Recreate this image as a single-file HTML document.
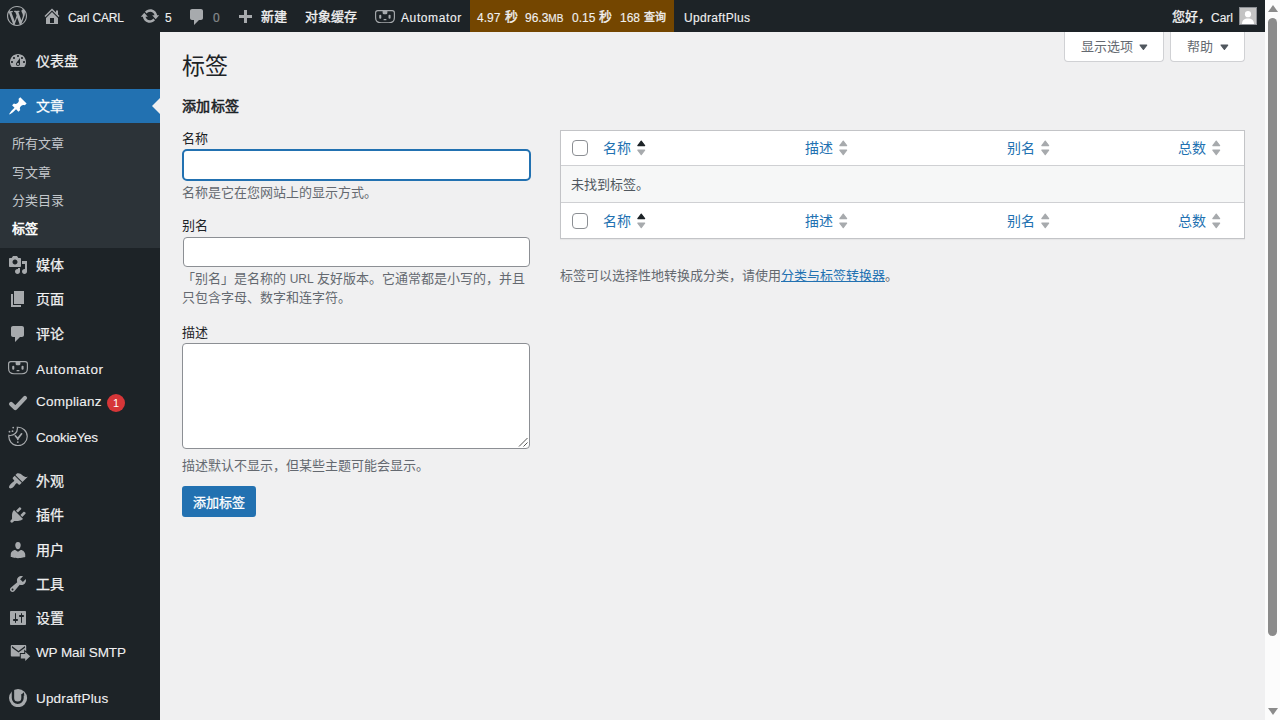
<!DOCTYPE html>
<html lang="zh-CN">
<head>
<meta charset="utf-8">
<title>标签</title>
<style>
*{box-sizing:border-box;}
html,body{margin:0;padding:0;}
body{width:1280px;height:720px;overflow:hidden;background:#f0f0f1;font-family:"Liberation Sans",sans-serif;font-size:13px;line-height:1.4;color:#3c434a;position:relative;}
svg{display:block;}
a{color:#2271b1;text-decoration:underline;}
/* admin bar */
#bar{position:absolute;left:0;top:0;width:1265px;height:32px;background:#1d2327;color:#f0f0f1;font-size:13px;line-height:32px;white-space:nowrap;}
#bar .t{position:absolute;top:2px;height:32px;line-height:32px;-webkit-text-stroke:.35px currentColor;}
#bar .t.c{top:1px;}
#bar .t.l{-webkit-text-stroke:.12px currentColor;}
.l{font-size:12px;}
.mi.lat .n{font-size:13.5px;}
#bar .ic{position:absolute;display:block;}
#bar .ic svg{fill:#a7aaad;}
#qm{position:absolute;left:470px;top:0;width:204px;height:32px;background:#744600;}
/* menu */
#menu{position:absolute;left:0;top:32px;width:160px;height:688px;background:#1d2327;}
#mlist{position:absolute;left:0;top:12px;width:160px;}
.sep{height:11px;}
.mi{position:relative;width:160px;height:34.2px;color:#f0f0f1;font-size:14px;line-height:18.2px;}
.ci{position:absolute;display:block;}
.av{position:absolute;left:1239px;top:7px;width:18px;height:18px;border:1px solid #8c8f94;background:#c4c4c4;}
#bar small{font-size:11px;}
.mi .n{position:absolute;left:36px;top:8px;white-space:nowrap;-webkit-text-stroke:.25px currentColor;}
.mi.lat .n{-webkit-text-stroke:.1px currentColor;}
.mi .i{position:absolute;left:8px;top:7px;width:20px;height:20px;}
.mi .i svg{fill:#a7aaad;}
.mi.cur{background:#2271b1;color:#fff;}
.mi.cur .i svg{fill:#fff;}
.mi.cur:after{content:"";position:absolute;right:0;top:9px;border:8px solid transparent;border-right-color:#f0f0f1;}
#sub{width:160px;height:124.8px;background:#2c3338;padding-top:7px;}
#sub div{padding:5px 12px;font-size:13px;line-height:18.2px;color:#c3c7cb;white-space:nowrap;}
#sub div.c{color:#fff;font-weight:700;}
.badge{position:absolute;left:107px;top:9px;width:18px;height:18px;border-radius:9px;background:#d63638;color:#fff;font-size:11px;line-height:18px;text-align:center;}
/* content */
h1{position:absolute;left:182px;top:51px;margin:0;font-size:23px;font-weight:400;line-height:30px;color:#1d2327;}
h2{position:absolute;left:182px;top:96px;margin:0;font-size:14px;font-weight:700;line-height:20px;color:#1d2327;}
.lbl{position:absolute;left:182px;font-size:13px;line-height:18px;color:#1d2327;}
.desc{position:absolute;left:182px;width:350px;font-size:13px;line-height:19.5px;color:#646970;}
.inp{position:absolute;left:183px;width:347px;height:30px;background:#fff;border:1px solid #8c8f94;border-radius:4px;}
.inp.f{left:182px;width:349px;height:32px;border:2px solid #2271b1;border-radius:5px;}
.ta{position:absolute;left:182px;top:343px;width:348px;height:106px;background:#fff;border:1px solid #8c8f94;border-radius:4px;}
.btn{position:absolute;left:182px;top:486px;width:74px;height:31px;background:#2271b1;border-radius:3px;color:#fff;font-size:13px;line-height:33px;text-align:center;-webkit-text-stroke:.3px #fff;}
.tab{position:absolute;top:32px;height:30px;background:#fff;border:1px solid #d0d1d4;border-top:none;border-radius:0 0 4px 4px;color:#646970;font-size:13px;line-height:30px;padding-left:16px;}
.ta2{position:absolute;right:15.5px;top:11.5px;}
/* table */
#tbl{position:absolute;left:560px;top:130px;width:685px;height:109px;background:#fff;border:1px solid #c3c4c7;box-shadow:0 1px 1px rgba(0,0,0,.04);}
#tbl .row{position:absolute;left:0;width:683px;}
#tbl .mid{top:34px;height:38px;background:#f6f7f7;border-top:1px solid #cfd0d3;border-bottom:1px solid #cfd0d3;color:#50575e;font-size:13px;line-height:19.5px;padding:9px 10px;}
.cb{position:absolute;left:11px;width:16px;height:16px;border:1px solid #8c8f94;border-radius:4px;background:#fff;}
.th{position:absolute;font-size:14px;line-height:20px;color:#2271b1;white-space:nowrap;}
.so{position:absolute;}
.note{position:absolute;left:560px;top:266px;font-size:13px;line-height:19.5px;color:#646970;white-space:nowrap;}
/* scrollbar */
#sb{position:absolute;left:1265px;top:0;width:15px;height:720px;background:#fcfcfc;}
#sb .thumb{position:absolute;left:3px;top:18px;width:9px;height:618px;border-radius:5px;background:#8b8b8b;}
#sb .up{position:absolute;left:3px;top:5px;border:5px solid transparent;border-bottom:7px solid #8b8b8b;border-top:none;width:0;height:0;}
#sb .dn{position:absolute;left:3px;top:708px;border:5px solid transparent;border-top:7px solid #8b8b8b;border-bottom:none;width:0;height:0;}
.fb{font-weight:400 !important;-webkit-text-stroke:.55px currentColor;letter-spacing:.3px;}
</style>
</head>
<body>
<div id="menu"><div id="mlist">
<div class="mi "><span class="i"><svg viewBox="0 0 20 20" width="20" height="20"><path d="M3.76 16h12.48c1.1-1.37 1.76-3.11 1.76-5 0-4.42-3.58-8-8-8s-8 3.58-8 8c0 1.89.66 3.63 1.76 5zM10 4c.55 0 1 .45 1 1s-.45 1-1 1-1-.45-1-1 .45-1 1-1zM6 6c.55 0 1 .45 1 1s-.45 1-1 1-1-.45-1-1 .45-1 1-1zm8 0c.55 0 1 .45 1 1s-.45 1-1 1-1-.45-1-1 .45-1 1-1zm-5.37 5.55L12 7v6c0 1.1-.9 2-2 2s-2-.9-2-2c0-.57.24-1.08.63-1.45zM4 10c.55 0 1 .45 1 1s-.45 1-1 1-1-.45-1-1 .45-1 1-1zm12 0c.55 0 1 .45 1 1s-.45 1-1 1-1-.45-1-1 .45-1 1-1zm-5 3c0-.55-.45-1-1-1s-1 .45-1 1 .45 1 1 1 1-.45 1-1z"/></svg></span><span class="n">仪表盘</span></div>
<div class="sep"></div>
<div class="mi cur"><span class="i"><svg viewBox="0 0 20 20" width="20" height="20"><path d="M10.44 3.02l1.82-1.82 6.36 6.35-1.83 1.82c-1.05-.68-2.48-.57-3.41.36l-.75.75c-.92.93-1.04 2.35-.35 3.41l-1.83 1.82-2.41-2.41-2.8 2.79c-.42.42-3.38 2.71-3.8 2.29s1.86-3.39 2.28-3.81l2.79-2.79L4.1 9.36l1.83-1.82c1.05.69 2.48.57 3.4-.36l.75-.75c.93-.92 1.05-2.35.36-3.41z"/></svg></span><span class="n">文章</span></div>
<div id="sub"><div>所有文章</div><div>写文章</div><div>分类目录</div><div class="c fb">标签</div></div>
<div class="mi "><span class="i"><svg viewBox="0 0 20 20" width="20" height="20"><path d="M13 11V4c0-.55-.45-1-1-1h-1.67L9 1H5L3.67 3H2c-.55 0-1 .45-1 1v7c0 .55.45 1 1 1h10c.55 0 1-.45 1-1zM7 4.5c1.38 0 2.5 1.12 2.5 2.5S8.38 9.5 7 9.5 4.5 8.38 4.5 7 5.62 4.5 7 4.5zM14 6h5v10.5c0 1.38-1.12 2.5-2.5 2.5S14 17.88 14 16.5s1.12-2.5 2.5-2.5c.17 0 .34.02.5.05V9h-3V6zm-4 8.05V13h2v3.5c0 1.38-1.12 2.5-2.5 2.5S7 17.88 7 16.5 8.12 14 9.5 14c.17 0 .34.02.5.05z"/></svg></span><span class="n">媒体</span></div>
<div class="mi "><span class="i"><svg viewBox="0 0 20 20" width="20" height="20"><path d="M6 15V2h10v13H6zm-1 1h8v2H3V5h2v11z"/></svg></span><span class="n">页面</span></div>
<div class="mi "><span class="i"><svg viewBox="0 0 20 20" width="20" height="20"><path d="M5 2h9c1.1 0 2 .9 2 2v7c0 1.1-.9 2-2 2h-2l-5 5v-5H5c-1.1 0-2-.9-2-2V4c0-1.1.9-2 2-2z"/></svg></span><span class="n">评论</span></div>
<div class="mi lat"><span class="i" style="top:10.6px;"><svg viewBox="0 0 20 13.4" width="20" height="13.4"><path fill="none" stroke="#a7aaad" stroke-width="1.15" d="M2.8.6H17.2Q19.4.6 19.4 2.8V7.6Q19.4 12.8 14 12.8H6Q.6 12.8.6 7.6V2.8Q.6.6 2.8.6Z"/><path d="M7.6.6h4.8v2.2q0 1.5-1.5 1.5H9.1q-1.5 0-1.5-1.5z"/><rect x="4.2" y="4.7" width="2.1" height="4" rx="1"/><rect x="13.5" y="4.7" width="2.1" height="4" rx="1"/><rect x="8.5" y="9.1" width="3" height="1.2" rx=".6"/></svg></span><span class="n" style="letter-spacing:.59px;top:10px">Automator</span></div>
<div class="mi lat b"><span class="i"><svg viewBox="0 0 20 20" width="20" height="20"><path fill="none" stroke="#a7aaad" stroke-width="4.2" stroke-linecap="round" stroke-linejoin="round" d="M3.1 11.9L7.3 16.1L17 5.9"/></svg></span><span class="n" style="letter-spacing:.22px">Complianz</span><span class="badge">1</span></div>
<div class="mi lat"><span class="i" style="top:6.7px;"><svg viewBox="0 0 20 20" width="20" height="20"><path fill="none" stroke="#a7aaad" stroke-width="1.2" stroke-linecap="round" d="M9.3 1.3A9.2 9.2 0 1 1 .9 9.3A7 7 0 0 0 9.3 1.3Z"/><path fill="none" stroke="#a7aaad" stroke-width="1.7" stroke-linecap="round" stroke-linejoin="round" d="M7.3 9.8L9.8 12.6L13.6 7.8M9.8 12.6V13.3"/><circle cx="9.8" cy="16.1" r=".9"/><circle cx="5.2" cy="1.6" r=".9"/><circle cx="1.5" cy="5.7" r=".9"/><circle cx="4.5" cy="5.2" r=".9"/></svg></span><span class="n" style="letter-spacing:-.25px;top:10px">CookieYes</span></div>
<div class="sep"></div>
<div class="mi "><span class="i"><svg viewBox="0 0 20 20" width="20" height="20"><path d="M14.48 11.06L7.41 3.99l1.5-1.5c.5-.56 2.3-.47 3.51.32 1.21.8 1.43 1.28 2.91 2.1 1.18.64 2.45 1.26 4.45.85zm-.71.71L6.7 4.7 4.93 6.47c-.39.39-.39 1.02 0 1.41l1.06 1.06c.39.39.39 1.03 0 1.42-.6.6-1.43 1.11-2.21 1.69-.35.26-.7.53-1.01.84C1.43 14.23.4 16.08 1.4 17.07c.99 1 2.84-.03 4.18-1.36.31-.31.58-.66.85-1.02.57-.78 1.08-1.61 1.69-2.21.39-.39 1.02-.39 1.41 0l1.06 1.06c.39.39 1.02.39 1.41 0z"/></svg></span><span class="n">外观</span></div>
<div class="mi "><span class="i"><svg viewBox="0 0 20 20" width="20" height="20"><path d="M13.11 4.36L9.87 7.6 8 5.73l3.24-3.24c.35-.34 1.05-.2 1.56.32.52.51.66 1.21.31 1.55zm-8 1.77l.91-1.12 9.01 9.01-1.19.84c-.71.71-2.63 1.16-3.82 1.16H6.14L4.9 17.26c-.59.59-1.54.59-2.12 0-.59-.58-.59-1.53 0-2.12l1.24-1.24v-3.88c0-1.13.4-3.19 1.09-3.89zm7.26 3.97l3.24-3.24c.34-.35 1.04-.21 1.55.31.52.51.66 1.21.31 1.55l-3.24 3.25z"/></svg></span><span class="n">插件</span></div>
<div class="mi "><span class="i"><svg viewBox="0 0 20 20" width="20" height="20"><path d="M10 9.25c-2.27 0-2.73-3.44-2.73-3.44C7 4.02 7.82 2 9.97 2c2.16 0 2.98 2.02 2.71 3.81 0 0-.41 3.44-2.68 3.44zm0 2.57L12.72 10c2.39 0 4.52 2.33 4.52 4.53v2.49s-3.65 1.13-7.24 1.13c-3.65 0-7.24-1.13-7.24-1.13v-2.49c0-2.25 1.94-4.48 4.47-4.48z"/></svg></span><span class="n">用户</span></div>
<div class="mi "><span class="i"><svg viewBox="0 0 20 20" width="20" height="20"><path d="M16.68 9.77c-1.34 1.34-3.3 1.67-4.95.99l-5.41 6.52c-.99.99-2.59.99-3.58 0s-.99-2.59 0-3.57l6.52-5.42c-.68-1.65-.35-3.61.99-4.95 1.28-1.28 3.12-1.62 4.72-1.06l-2.89 2.89 2.82 2.82 2.86-2.87c.53 1.58.18 3.39-1.08 4.65zM3.81 16.21c.4.39 1.04.39 1.43 0 .4-.4.4-1.04 0-1.43-.39-.4-1.03-.4-1.43 0-.39.39-.39 1.03 0 1.43z"/></svg></span><span class="n">工具</span></div>
<div class="mi "><span class="i"><svg viewBox="0 0 20 20" width="20" height="20"><path d="M18 16V4c0-.55-.45-1-1-1H3c-.55 0-1 .45-1 1v12c0 .55.45 1 1 1h14c.55 0 1-.45 1-1zM8 11h1c.55 0 1 .45 1 1s-.45 1-1 1H8v1.5c0 .28-.22.5-.5.5s-.5-.22-.5-.5V13H6c-.55 0-1-.45-1-1s.45-1 1-1h1V5.5c0-.28.22-.5.5-.5s.5.22.5.5V11zm5-2h-1c-.55 0-1-.45-1-1s.45-1 1-1h1V5.5c0-.28.22-.5.5-.5s.5.22.5.5V7h1c.55 0 1 .45 1 1s-.45 1-1 1h-1v5.5c0 .28-.22.5-.5.5s-.5-.22-.5-.5V9z"/></svg></span><span class="n">设置</span></div>
<div class="mi lat"><span class="i" style="width:24px;"><svg viewBox="0 0 24 20" width="24" height="20"><path fill-rule="evenodd" d="M3.8 3H17.2Q18.2 3 18.2 4V9.2L16.2 7.6V11H11.8V14.6H3.8Q2.8 14.6 2.8 13.6V4Q2.8 3 3.8 3ZM4 4.1V5.7L10.5 10.6L17 5.7V4.1L10.5 8.9Z"/><path d="M12.8 12H17.2V9.7L22.2 14.3L17.2 18.9V16.6H12.8Z"/></svg></span><span class="n" style="letter-spacing:-.12px;top:9px">WP Mail SMTP</span></div>
<div class="sep"></div>
<div class="mi lat"><span class="i"><svg viewBox="0 0 20 20" width="20" height="20"><circle cx="10.06" cy="11.1" r="9.06"/><path fill="none" stroke="#1d2327" stroke-width="2.4" d="M4.96 1V11A4.78 4.78 0 0 0 14.52 11V7.4"/><path fill="#1d2327" d="M12.9 8.1L15.9 5.2L16.3 8.7Z"/></svg></span><span class="n" style="letter-spacing:.17px;top:10px">UpdraftPlus</span></div>
</div></div>
<div id="bar">
<span class="ic" style="left:7px;top:6px;"><svg viewBox="0 0 20 20" width="20" height="20"><path d="M20 10c0-5.51-4.49-10-10-10C4.48 0 0 4.49 0 10c0 5.52 4.48 10 10 10 5.51 0 10-4.48 10-10zM7.78 15.37L4.37 6.22c.55-.02 1.17-.08 1.17-.08.5-.06.44-1.13-.06-1.11 0 0-1.45.11-2.37.11-.18 0-.37 0-.58-.01C4.12 2.69 6.87 1.11 10 1.11c2.33 0 4.45.87 6.05 2.34-.68-.11-1.65.39-1.65 1.58 0 .74.45 1.36.9 2.1.35.61.55 1.36.55 2.46 0 1.49-1.4 5-1.4 5l-3.03-8.37c.54-.02.82-.17.82-.17.5-.05.44-1.25-.06-1.22 0 0-1.44.12-2.38.12-.87 0-2.33-.12-2.33-.12-.5-.03-.56 1.2-.06 1.22l.92.08 1.26 3.41zM17.41 10c.24-.64.74-1.87.43-4.25.7 1.29 1.05 2.71 1.05 4.25 0 3.29-1.73 6.24-4.4 7.78.97-2.59 1.94-5.2 2.92-7.78zM6.1 18.09C3.12 16.65 1.11 13.53 1.11 10c0-1.3.23-2.48.72-3.59C3.25 10.3 4.67 14.2 6.1 18.09zm4.03-6.63l2.58 6.98c-.86.29-1.76.45-2.71.45-.79 0-1.57-.11-2.29-.33.81-2.38 1.62-4.74 2.42-7.1z"/></svg></span>
<span class="ic" style="left:42px;top:6px;"><svg viewBox="0 0 20 20" width="20" height="20"><path d="M16 8.5l1.53 1.53-1.06 1.06L10 4.62l-6.47 6.47-1.06-1.06L10 2.5l4 4v-2h2v4zm-6-2.46l6 5.99V18H4v-5.97zM12 17v-5H8v5h4z"/></svg></span>
<span class="t l" style="left:68px;letter-spacing:-.18px;">Carl CARL</span>
<span class="ic" style="left:140px;top:6px;"><svg viewBox="0 0 20 20" width="20" height="20"><path d="M10.2 3.28c3.53 0 6.43 2.61 6.92 6h2.08l-3.5 4-3.5-4h2.32c-.45-1.97-2.21-3.45-4.32-3.45-1.45 0-2.73.71-3.54 1.78L4.95 5.66C6.23 4.2 8.11 3.28 10.2 3.28zm-.4 13.44c-3.52 0-6.43-2.61-6.92-6H.8l3.5-4c1.17 1.33 2.33 2.67 3.5 4H5.48c.45 1.97 2.21 3.45 4.32 3.45 1.45 0 2.73-.71 3.54-1.78l1.71 1.95c-1.28 1.46-3.15 2.38-5.25 2.38z"/></svg></span>
<span class="t l" style="left:165px;">5</span>
<span class="ic" style="left:187px;top:7px;"><svg viewBox="0 0 20 20" width="20" height="20"><path d="M5 2h9c1.1 0 2 .9 2 2v7c0 1.1-.9 2-2 2h-2l-5 5v-5H5c-1.1 0-2-.9-2-2V4c0-1.1.9-2 2-2z"/></svg></span>
<span class="t l" style="left:213px;opacity:.5;">0</span>
<span class="ic" style="left:235px;top:8px;"><svg viewBox="0 0 20 20" width="20" height="20"><path d="M17 7v3h-5v5H9v-5H4V7h5V2h3v5h5z"/></svg></span>
<span class="t c" style="left:261px;">新建</span>
<span class="t c" style="left:305px;">对象缓存</span>
<span class="ic" style="left:374.5px;top:9.7px;"><svg viewBox="0 0 20 13.4" width="20" height="13.4"><path fill="none" stroke="#a7aaad" stroke-width="1.15" d="M2.8.6H17.2Q19.4.6 19.4 2.8V7.6Q19.4 12.8 14 12.8H6Q.6 12.8.6 7.6V2.8Q.6.6 2.8.6Z"/><path d="M7.6.6h4.8v2.2q0 1.5-1.5 1.5H9.1q-1.5 0-1.5-1.5z"/><rect x="4.2" y="4.7" width="2.1" height="4" rx="1"/><rect x="13.5" y="4.7" width="2.1" height="4" rx="1"/><rect x="8.5" y="9.1" width="3" height="1.2" rx=".6"/></svg></span>
<span class="t l" style="left:401px;letter-spacing:.6px;">Automator</span>
<div id="qm"></div>
<span class="t l" style="left:477px;">4.97</span><span class="t c" style="left:504.5px;">秒</span>
<span class="t l" style="left:525px;">96.3<small style="font-size:10px">MB</small></span>
<span class="t l" style="left:572px;">0.15</span><span class="t c" style="left:599.3px;">秒</span>
<span class="t l" style="left:620px;">168</span><span class="t c" style="left:644px;"><small>查询</small></span>
<span class="t l" style="left:684px;letter-spacing:.33px;">UpdraftPlus</span>
<span class="t c" style="left:1172px;">您好，</span><span class="t l" style="left:1211px;">Carl</span>
<span class="av"><svg viewBox="0 0 16 16" width="16" height="16"><rect width="16" height="16" fill="#c4c4c4"/><circle cx="8" cy="6.2" r="3.1" fill="#fff"/><path d="M2 16c0-4 2.5-5.6 6-5.6s6 1.6 6 5.6z" fill="#fff"/></svg></span>
</div>
<div id="content">
<div class="tab" style="left:1064px;width:100px;">显示选项<svg class="ta2" width="9" height="7" viewBox="0 0 9 7"><path d="M1.1 1.1H7.7L4.4 5.4Z" fill="#50575e" stroke="#50575e" stroke-width="1.2" stroke-linejoin="round"/></svg></div>
<div class="tab" style="left:1170px;width:75px;">帮助<svg class="ta2" width="9" height="7" viewBox="0 0 9 7"><path d="M1.1 1.1H7.7L4.4 5.4Z" fill="#50575e" stroke="#50575e" stroke-width="1.2" stroke-linejoin="round"/></svg></div>
<h1>标签</h1>
<h2 class="fb">添加标签</h2>
<div class="lbl" style="top:130px;">名称</div>
<div class="inp f" style="top:149px;"></div>
<div class="desc" style="top:183px;">名称是它在您网站上的显示方式。</div>
<div class="lbl" style="top:217px;">别名</div>
<div class="inp" style="top:237px;"></div>
<div class="desc" style="top:270px;line-height:18.5px;">「别名」是名称的 <span class="l">URL</span> 友好版本。它通常都是小写的，并且只包含字母、数字和连字符。</div>
<div class="lbl" style="top:324px;">描述</div>
<div class="ta"><svg style="position:absolute;right:1px;bottom:1px" width="10" height="10" viewBox="0 0 10 10"><path d="M1 9.5L9.5 1M5.5 9.5L9.5 5.5" stroke="#555" stroke-width="1" fill="none"/></svg></div>
<div class="desc" style="top:456px;">描述默认不显示，但某些主题可能会显示。</div>
<div class="btn">添加标签</div>
<div id="tbl">
 <div class="row" style="top:0px;height:34px;">
  <div class="cb" style="top:9px;"></div>
  <div class="th" style="left:42px;top:7px;">名称</div><svg class="so" style="left:75.5px;top:9px" width="9" height="16" viewBox="0 0 9 16"><path d="M4.25 1L7.7 5.6H.8Z" fill="#1d2327" stroke="#1d2327" stroke-width="1.1" stroke-linejoin="round"/><path d="M4.25 14.7L7.7 10.1H.8Z" fill="#a7aaad" stroke="#a7aaad" stroke-width="1.1" stroke-linejoin="round"/></svg>
  <div class="th" style="left:244px;top:7px;">描述</div><svg class="so" style="left:278px;top:9px" width="9" height="16" viewBox="0 0 9 16"><path d="M4.25 1L7.7 5.6H.8Z" fill="#a7aaad" stroke="#a7aaad" stroke-width="1.1" stroke-linejoin="round"/><path d="M4.25 14.7L7.7 10.1H.8Z" fill="#a7aaad" stroke="#a7aaad" stroke-width="1.1" stroke-linejoin="round"/></svg>
  <div class="th" style="left:446px;top:7px;">别名</div><svg class="so" style="left:480px;top:9px" width="9" height="16" viewBox="0 0 9 16"><path d="M4.25 1L7.7 5.6H.8Z" fill="#a7aaad" stroke="#a7aaad" stroke-width="1.1" stroke-linejoin="round"/><path d="M4.25 14.7L7.7 10.1H.8Z" fill="#a7aaad" stroke="#a7aaad" stroke-width="1.1" stroke-linejoin="round"/></svg>
  <div class="th" style="left:617px;top:7px;">总数</div><svg class="so" style="left:650.5px;top:9px" width="9" height="16" viewBox="0 0 9 16"><path d="M4.25 1L7.7 5.6H.8Z" fill="#a7aaad" stroke="#a7aaad" stroke-width="1.1" stroke-linejoin="round"/><path d="M4.25 14.7L7.7 10.1H.8Z" fill="#a7aaad" stroke="#a7aaad" stroke-width="1.1" stroke-linejoin="round"/></svg>
 </div>
 <div class="row mid">未找到标签。</div>
 <div class="row" style="top:72px;height:35px;">
  <div class="cb" style="top:10px;"></div>
  <div class="th" style="left:42px;top:8px;">名称</div><svg class="so" style="left:75.5px;top:10px" width="9" height="16" viewBox="0 0 9 16"><path d="M4.25 1L7.7 5.6H.8Z" fill="#1d2327" stroke="#1d2327" stroke-width="1.1" stroke-linejoin="round"/><path d="M4.25 14.7L7.7 10.1H.8Z" fill="#a7aaad" stroke="#a7aaad" stroke-width="1.1" stroke-linejoin="round"/></svg>
  <div class="th" style="left:244px;top:8px;">描述</div><svg class="so" style="left:278px;top:10px" width="9" height="16" viewBox="0 0 9 16"><path d="M4.25 1L7.7 5.6H.8Z" fill="#a7aaad" stroke="#a7aaad" stroke-width="1.1" stroke-linejoin="round"/><path d="M4.25 14.7L7.7 10.1H.8Z" fill="#a7aaad" stroke="#a7aaad" stroke-width="1.1" stroke-linejoin="round"/></svg>
  <div class="th" style="left:446px;top:8px;">别名</div><svg class="so" style="left:480px;top:10px" width="9" height="16" viewBox="0 0 9 16"><path d="M4.25 1L7.7 5.6H.8Z" fill="#a7aaad" stroke="#a7aaad" stroke-width="1.1" stroke-linejoin="round"/><path d="M4.25 14.7L7.7 10.1H.8Z" fill="#a7aaad" stroke="#a7aaad" stroke-width="1.1" stroke-linejoin="round"/></svg>
  <div class="th" style="left:617px;top:8px;">总数</div><svg class="so" style="left:650.5px;top:10px" width="9" height="16" viewBox="0 0 9 16"><path d="M4.25 1L7.7 5.6H.8Z" fill="#a7aaad" stroke="#a7aaad" stroke-width="1.1" stroke-linejoin="round"/><path d="M4.25 14.7L7.7 10.1H.8Z" fill="#a7aaad" stroke="#a7aaad" stroke-width="1.1" stroke-linejoin="round"/></svg>
 </div>
</div>
<div class="note">标签可以选择性地转换成分类，请使用<a>分类与标签转换器</a>。</div>
</div>
<div id="sb"><div class="up"></div><div class="thumb"></div><div class="dn"></div></div>
</body>
</html>
